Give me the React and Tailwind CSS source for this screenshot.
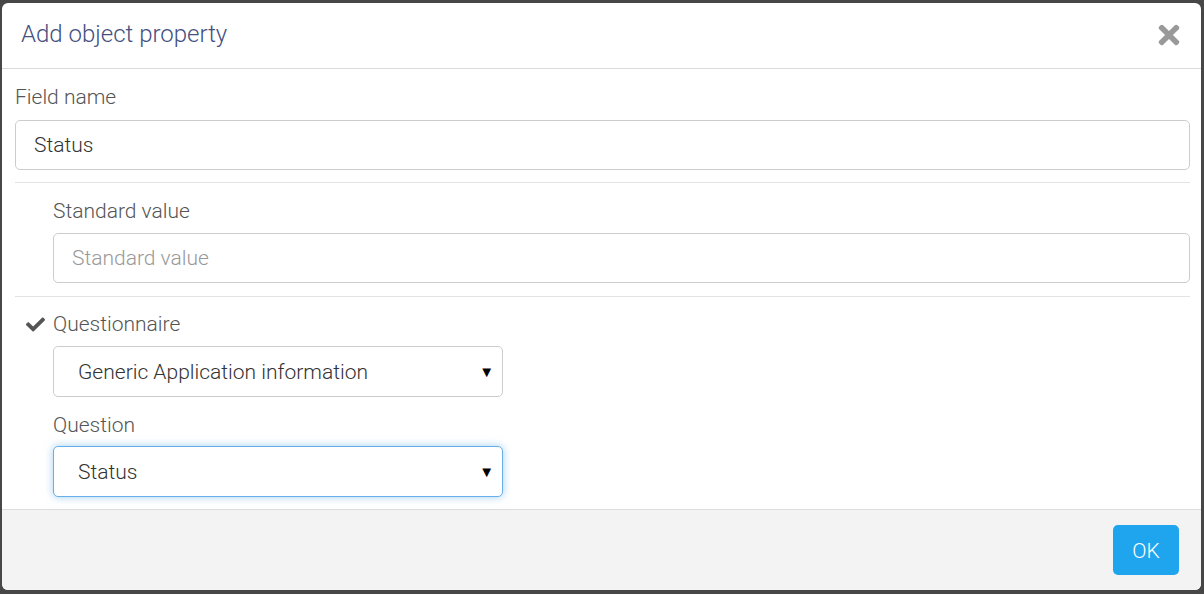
import React from 'react';
import { FaCheck, FaTimes } from 'react-icons/fa';

const font = { fontFamily: 'Roboto, "Open Sans", sans-serif' };

const Label = ({ children }) => (
  <div className="text-[21px] font-light text-[#555] leading-[24px]">{children}</div>
);

const SelectBox = ({ value, focused }) => (
  <div
    className={`relative flex items-center w-[450px] h-[51px] rounded-[5px] border bg-white pl-6 pr-10 pt-[2px] text-[21px] font-light text-[#333] ${
      focused ? 'border-[#66afe9] shadow-[0_0_8px_rgba(102,175,233,0.6)]' : 'border-[#ccc]'
    }`}
  >
    {value}
    <span className="absolute right-[8px] top-[14px] text-[15px] text-black">▼</span>
  </div>
);

const App = () => {
  return (
    <div style={font} className="w-[1204px] h-[594px] bg-[#474747] pt-[3px] pl-[2px] overflow-hidden">
      <div className="w-[1199px] h-[587px] bg-white rounded-[6px] flex flex-col overflow-hidden">
        {/* Header */}
        <div className="h-[66px] flex items-center justify-between pl-[19px] pr-[19px] pb-[3px] border-b border-[#d9d9d9] shrink-0">
          <h4 className="text-[24px] font-light text-[#445080]">Add object property</h4>
          <FaTimes className="text-[#999] w-[26px] h-[30px] mt-[2px]" />
        </div>

        {/* Body */}
        <div className="flex-1 pl-[13px] pr-[11px] pt-[16px]">
          <Label>Field name</Label>
          <div className="mt-[11px] h-[50px] rounded-[5px] border border-[#ccc] flex items-center px-[18px] pt-[2px] text-[21px] font-light text-[#333]">
            Status
          </div>
          <div className="mt-[12px] border-t border-[#e3e3e3]" />

          <div className="pl-[38px] pt-[16px]">
            <Label>Standard value</Label>
            <div className="mt-[10px] h-[50px] rounded-[5px] border border-[#ccc] flex items-center px-[18px] pt-[2px] text-[21px] font-light text-[#999]">
              Standard value
            </div>
          </div>
          <div className="mt-[13px] border-t border-[#e3e3e3]" />

          <div className="pt-[15px]">
            <div className="flex items-center">
              <div className="w-[38px] flex justify-center pl-[3px]">
                <FaCheck className="text-[#555] w-[19px] h-[19px]" />
              </div>
              <Label>Questionnaire</Label>
            </div>
            <div className="pl-[38px] mt-[10px]">
              <SelectBox value="Generic Application information" />
              <div className="mt-[16px]">
                <Label>Question</Label>
              </div>
              <div className="mt-[9px]">
                <SelectBox value="Status" focused />
              </div>
            </div>
          </div>
        </div>

        {/* Footer */}
        <div className="h-[81px] shrink-0 bg-[#f3f3f3] border-t border-[#ddd] flex items-start justify-end pt-[15px] pr-[22px]">
          <button className="w-[66px] h-[50px] rounded-[5px] bg-[#1ea5ee] pt-[3px] text-white text-[21px] font-light">
            OK
          </button>
        </div>
      </div>
    </div>
  );
};

export default App;
